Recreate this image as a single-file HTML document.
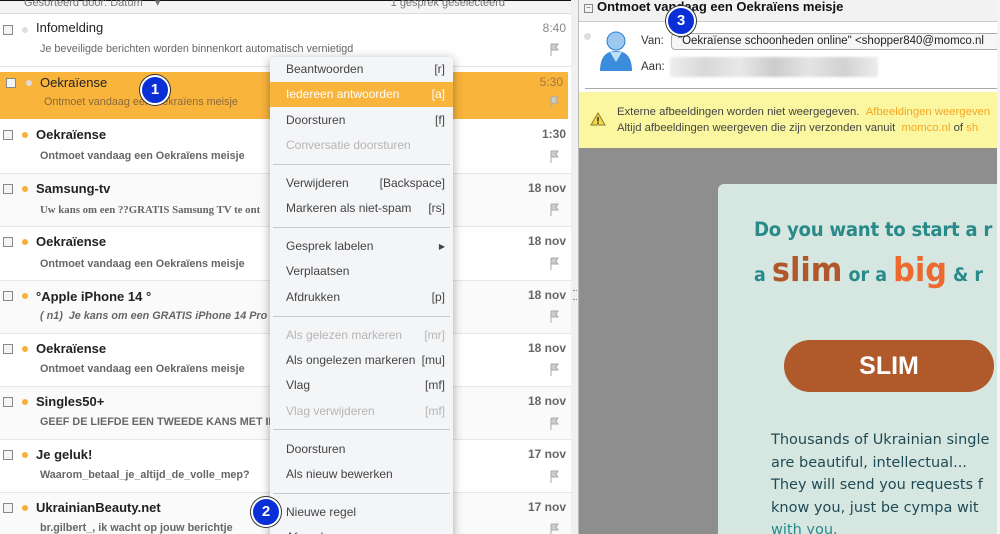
<!DOCTYPE html>
<html><head><meta charset="utf-8"><style>
*{margin:0;padding:0;box-sizing:border-box}
html,body{width:1000px;height:534px;overflow:hidden}
body{position:relative;background:#fff;font-family:"Liberation Sans","DejaVu Sans",sans-serif;font-size:12px;color:#222}
.abs{position:absolute}
.row{position:absolute;left:0;width:571px;border-bottom:1px solid #e6e6e6}
.cb{position:absolute;left:3px;width:10px;height:10px;border:1px solid #888;background:#f4f4f4}
.dot{position:absolute;left:22px;width:6px;height:6px;border-radius:50%;background:#f7b033}
.ti{position:absolute;left:36px;font-size:13px;font-weight:bold;color:#222;white-space:nowrap}
.su{position:absolute;left:40px;font-size:10.8px;font-weight:bold;color:#666;white-space:nowrap}
.tm{position:absolute;right:5px;font-size:12px;font-weight:bold;color:#666}
.menu{position:absolute;left:270px;top:57px;width:183px;height:490px;background:#f4f5f7;box-shadow:0 2px 10px rgba(0,0,0,.35);border-radius:3px;font-size:12px;color:#444}
.mi{position:absolute;left:0;width:183px;height:25px;line-height:25px;padding:0 8px 0 16px;white-space:nowrap}
.mi span{float:right}
.dis{color:#b5b5b5}
.sep{position:absolute;left:3px;width:177px;height:1px;background:#c8c8c8}
.badge{position:absolute;width:30px;height:30px;border-radius:50%;background:#0a2fd6;border:2px solid #fff;box-shadow:0 0 0 1px #333;color:#fff;font-weight:bold;font-size:15px;text-align:center;line-height:26px}
</style></head><body>
<div class="abs" style="left:0;top:0;width:571px;height:14px;background:#f4f4f4;border-bottom:1px solid #ddd;border-top:1px solid #111;font-size:11px;color:#777;line-height:8px">
<span style="position:absolute;left:24px;top:-2px">Gesorteerd door: Datum &nbsp;&nbsp;&nbsp;▾</span><span style="position:absolute;right:66px;top:-2px">1 gesprek geselecteerd</span></div>

<div class="row" style="top:15px;height:52px;background:#fff"><div class="cb" style="top:10px"></div><div class="dot" style="top:12px;background:#ddd"></div><div class="ti" style="top:5px;font-weight:normal">Infomelding</div><div class="su" style="top:28px;left:40px;font-weight:normal">Je beveiligde berichten worden binnenkort automatisch vernietigd</div><div class="tm" style="top:6px;font-weight:normal;color:#888">8:40</div></div>
<div class="row" style="top:72px;height:47px;background:#f9b43c;border:none;width:568px"><div class="cb" style="top:6px;left:6px"></div><div class="dot" style="top:8px;left:26px;background:#ddd"></div><div class="ti" style="top:3px;left:40px;font-weight:normal">Oekraïense</div><div class="su" style="top:24px;left:44px;font-weight:normal;color:#8a6a3a">Ontmoet vandaag een Oekraïens meisje</div><div class="tm" style="top:3px;font-weight:normal;color:#a07a3a">5:30</div></div>

<div class="row" style="top:121px;height:53px"><div class="cb" style="top:9px"></div><div class="dot" style="top:11px"></div><div class="ti" style="top:6px">Oekraïense</div><div class="su" style="top:29px">Ontmoet vandaag een Oekraïens meisje</div><div class="tm" style="top:6px">1:30</div></div>
<div class="row" style="top:174px;height:53px;background:#fafafa"><div class="cb" style="top:10px"></div><div class="dot" style="top:12px"></div><div class="ti" style="top:7px">Samsung-tv</div><div class="su" style="top:30px;font-family:'Liberation Serif',serif">Uw kans om een ??GRATIS Samsung TV te ont</div><div class="tm" style="top:7px">18 nov</div></div>
<div class="row" style="top:227px;height:54px"><div class="cb" style="top:10px"></div><div class="dot" style="top:12px"></div><div class="ti" style="top:7px">Oekraïense</div><div class="su" style="top:31px">Ontmoet vandaag een Oekraïens meisje</div><div class="tm" style="top:7px">18 nov</div></div>
<div class="row" style="top:281px;height:53px;background:#fafafa"><div class="cb" style="top:10px"></div><div class="dot" style="top:12px"></div><div class="ti" style="top:8px">°Apple iPhone 14 °</div><div class="su" style="top:29px;font-style:italic">( n1) &nbsp;Je kans om een GRATIS iPhone 14 Pro te</div><div class="tm" style="top:7px">18 nov</div></div>
<div class="row" style="top:334px;height:53px"><div class="cb" style="top:10px"></div><div class="dot" style="top:12px"></div><div class="ti" style="top:7px">Oekraïense</div><div class="su" style="top:29px">Ontmoet vandaag een Oekraïens meisje</div><div class="tm" style="top:7px">18 nov</div></div>
<div class="row" style="top:387px;height:53px;background:#fafafa"><div class="cb" style="top:10px"></div><div class="dot" style="top:12px"></div><div class="ti" style="top:7px">Singles50+</div><div class="su" style="top:29px">GEEF DE LIEFDE EEN TWEEDE KANS MET IEMANI</div><div class="tm" style="top:7px">18 nov</div></div>
<div class="row" style="top:440px;height:53px"><div class="cb" style="top:10px"></div><div class="dot" style="top:12px"></div><div class="ti" style="top:7px">Je geluk!</div><div class="su" style="top:29px">Waarom_betaal_je_altijd_de_volle_mep?</div><div class="tm" style="top:7px">17 nov</div></div>
<div class="row" style="top:493px;height:53px;background:#fafafa"><div class="cb" style="top:10px"></div><div class="dot" style="top:12px"></div><div class="ti" style="top:7px">UkrainianBeauty.net</div><div class="su" style="top:29px">br.gilbert_, ik wacht op jouw berichtje</div><div class="tm" style="top:7px">17 nov</div></div>

<svg class="abs" style="left:0;top:0" width="571" height="534">
<g fill="#ccc" stroke="#aaa" stroke-width="1">
<path d="M551 44v12M551 44h7l-2 3 2 3h-7"/><path d="M551 97v12M551 97h7l-2 3 2 3h-7"/><path d="M551 151v12M551 151h7l-2 3 2 3h-7"/><path d="M551 204v12M551 204h7l-2 3 2 3h-7"/><path d="M551 258v12M551 258h7l-2 3 2 3h-7"/><path d="M551 311v12M551 311h7l-2 3 2 3h-7"/><path d="M551 364v12M551 364h7l-2 3 2 3h-7"/><path d="M551 418v12M551 418h7l-2 3 2 3h-7"/><path d="M551 471v12M551 471h7l-2 3 2 3h-7"/><path d="M551 524v12M551 524h7l-2 3 2 3h-7"/>
</g></svg>

<div class="abs" style="left:571px;top:0;width:8px;height:534px;background:#f0f0f0;border-right:1px solid #bbb"></div>
<div class="abs" style="left:573px;top:290px;width:4px;height:10px;border-top:1px dotted #888;border-bottom:1px dotted #888"></div>

<!-- right pane -->
<div class="abs" style="left:579px;top:0;width:421px;height:22px;background:#f2f2f2;border-bottom:1px solid #ccc"><span style="position:absolute;left:5px;top:4px;width:9px;height:9px;border:1px solid #888;font-size:8px;line-height:6px;text-align:center;color:#555">−</span><span style="position:absolute;left:18px;top:-1px;font-weight:bold;font-size:13px;color:#111">Ontmoet vandaag een Oekraïens meisje</span></div>
<div class="abs" style="left:579px;top:23px;width:421px;height:69px;background:#fff"></div>
<div class="abs" style="left:584px;top:33px;width:7px;height:7px;border-radius:50%;background:#ddd"></div>
<svg class="abs" style="left:598px;top:28px" width="36" height="44"><circle cx="18" cy="13" r="9" fill="#9cc8ef" stroke="#2b7fd0"/><path d="M2 43c0-14 6-20 16-20s16 6 16 20z" fill="#3b8ddb"/><path d="M12 24l6 10 6-10" fill="#bfe0f8"/></svg>
<div class="abs" style="left:641px;top:35px;font-size:11.5px;color:#333">Van:</div>
<div class="abs" style="left:671px;top:33px;width:340px;height:17px;border:1px solid #aaa;border-radius:4px;background:#f6f6f6;font-size:11.5px;line-height:15px;padding-left:6px;color:#222;white-space:nowrap">"Oekraïense schoonheden online" &lt;shopper840@momco.nl</div>
<div class="abs" style="left:641px;top:61px;font-size:11.5px;color:#333">Aan:</div>
<div class="abs" style="left:670px;top:57px;width:208px;height:20px;background:linear-gradient(90deg,#eee,#d8d8d8,#e8e8e8,#ccc,#e4e4e4,#d2d2d2,#ececec);filter:blur(1px)"></div>
<div class="abs" style="left:585px;top:88px;width:415px;height:1px;background:#aaa"></div>
<div class="abs" style="left:579px;top:92px;width:421px;height:56px;background:#fbf6a0;font-size:11.3px;color:#444;line-height:16px"><div style="position:absolute;left:38px;top:12px;white-space:nowrap">Externe afbeeldingen worden niet weergegeven. <span style="color:#f5a623">&nbsp;Afbeeldingen weergeven</span></div><div style="position:absolute;left:38px;top:28px;white-space:nowrap">Altijd afbeeldingen weergeven die zijn verzonden vanuit &nbsp;<span style="color:#f5a623">momco.nl</span> of <span style="color:#f5a623">sh</span></div></div>
<svg class="abs" style="left:590px;top:112px" width="16" height="14"><path d="M8 1L15 13H1z" fill="#f2d94a" stroke="#8a7a2a"/><rect x="7.3" y="5" width="1.4" height="4.5" fill="#222"/><rect x="7.3" y="10.3" width="1.4" height="1.4" fill="#222"/></svg>
<div class="abs" style="left:579px;top:148px;width:421px;height:386px;background:#8e8e8e"></div>
<div class="abs" style="left:718px;top:184px;width:279px;height:350px;background:#d6e7e1;border-radius:6px 0 0 0;overflow:hidden">
<div class="abs" style="left:36px;top:34px;font-family:'DejaVu Sans',sans-serif;font-size:19.5px;font-weight:bold;color:#2a8a8a;white-space:nowrap;letter-spacing:-0.3px;transform:scaleX(0.93);transform-origin:left">Do you want to start a r</div>
<div class="abs" style="left:36px;top:66px;font-family:'DejaVu Sans',sans-serif;font-weight:bold;color:#2a8a8a;white-space:nowrap;transform:scaleX(0.92);transform-origin:left"><span style="font-size:19px">a </span><span style="font-size:33px;color:#b0572b">slim</span><span style="font-size:19px"> or a </span><span style="font-size:33px;color:#ec6a30">big</span><span style="font-size:19px"> &amp; r</span></div>
<div class="abs" style="left:66px;top:156px;width:210px;height:52px;border-radius:26px;background:#b0592b;color:#fff;font-weight:bold;font-size:25px;text-align:center;line-height:52px">SLIM</div>
<div class="abs" style="left:53px;top:245px;font-family:'DejaVu Sans',sans-serif;font-size:14.5px;color:#1f4a55;line-height:22.5px;white-space:nowrap">Thousands of Ukrainian single<br>are beautiful, intellectual...<br>They will send you requests f<br>know you, just be cympa wit<br><span style="color:#2a8a8a">with you.</span></div>
</div>
<div class="abs" style="left:997px;top:0;width:3px;height:534px;background:#f4f4f4"></div>

<!-- context menu -->
<div class="menu">
<div class="mi" style="top:0">Beantwoorden<span>[r]</span></div>
<div class="mi" style="top:25px;background:#f9b43c;color:#fff">Iedereen antwoorden<span>[a]</span></div>
<div class="mi" style="top:51px">Doorsturen<span>[f]</span></div>
<div class="mi dis" style="top:76px">Conversatie doorsturen</div>
<div class="sep" style="top:107px"></div>
<div class="mi" style="top:114px">Verwijderen<span>[Backspace]</span></div>
<div class="mi" style="top:139px">Markeren als niet-spam<span>[rs]</span></div>
<div class="sep" style="top:170px"></div>
<div class="mi" style="top:177px">Gesprek labelen<span style="font-size:8px">▶</span></div>
<div class="mi" style="top:202px">Verplaatsen</div>
<div class="mi" style="top:228px">Afdrukken<span>[p]</span></div>
<div class="sep" style="top:259px"></div>
<div class="mi dis" style="top:266px">Als gelezen markeren<span>[mr]</span></div>
<div class="mi" style="top:291px">Als ongelezen markeren<span>[mu]</span></div>
<div class="mi" style="top:316px">Vlag<span>[mf]</span></div>
<div class="mi dis" style="top:342px">Vlag verwijderen<span>[mf]</span></div>
<div class="sep" style="top:372px"></div>
<div class="mi" style="top:380px">Doorsturen</div>
<div class="mi" style="top:405px">Als nieuw bewerken</div>
<div class="sep" style="top:436px"></div>
<div class="mi" style="top:443px">Nieuwe regel</div>
<div class="mi" style="top:468px">Afzender ...</div>
</div>

<div class="badge" style="left:140px;top:75px">1</div>
<div class="badge" style="left:251px;top:497px">2</div>
<div class="badge" style="left:666px;top:6px">3</div>
</body></html>
